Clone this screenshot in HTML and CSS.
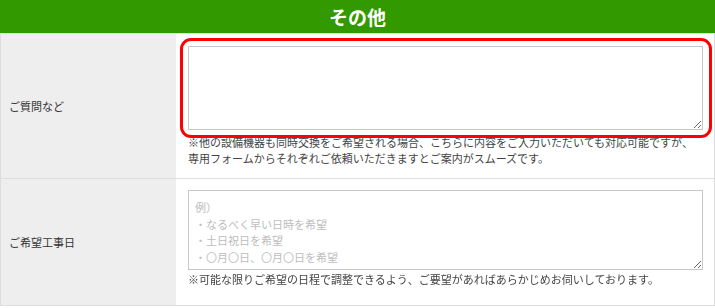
FILE: index.html
```html
<!DOCTYPE html>
<html lang="ja">
  <head>
    <meta charset="UTF-8" />
    <meta name="viewport" content="width=device-width, initial-scale=1.0" />
    <title>その他</title>
    <link rel="stylesheet" href="styles.css">
  </head>
  <body>
    <section class="form-block">
      <h2 class="block-title">その他</h2>
      <div class="form-table">
        <div class="form-row">
          <div class="form-label">ご質問など</div>
          <div class="form-field">
            <div class="highlight">
              <textarea class="field-area area-question"></textarea>
            </div>
            <p class="field-note">※他の設備機器も同時交換をご希望される場合、こちらに内容をご入力いただいても対応可能ですが、<br>専用フォームからそれぞれご依頼いただきますとご案内がスムーズです。</p>
          </div>
        </div>
        <div class="form-row">
          <div class="form-label">ご希望工事日</div>
          <div class="form-field field-date">
            <textarea class="field-area area-date" placeholder="例）&#10;・なるべく早い日時を希望&#10;・土日祝日を希望&#10;・〇月〇日、〇月〇日を希望"></textarea>
            <p class="field-note">※可能な限りご希望の日程で調整できるよう、ご要望があればあらかじめお伺いしております。</p>
          </div>
        </div>
      </div>
    </section>
  </body>
</html>
```

FILE: styles.css
```css
* {
  margin: 0;
  padding: 0;
  box-sizing: border-box;
}
body {
  background: #fff;
  color: #333;
  font-family: "Noto Sans CJK JP", "Noto Sans", sans-serif;
  font-size: 11px;
}
.form-block {
  width: 715px;
}
.block-title {
  height: 33px;
  line-height: 33px;
  background: #339900;
  color: #fff;
  font-size: 19px;
  font-weight: bold;
  text-align: center;
}
.form-table {
  border: 1px solid #ddd;
  border-bottom: none;
}
.form-row {
  display: grid;
  grid-template-columns: 175px 1fr;
  border-bottom: 1px solid #ddd;
}
.form-label {
  display: flex;
  align-items: center;
  padding-left: 8px;
  background: #eee;
}
.form-field {
  padding: 12px 11px 12px 12px;
}
.field-date {
  padding-top: 11px;
  padding-bottom: 18px;
}
.highlight {
  position: relative;
}
.highlight::after {
  content: "";
  position: absolute;
  top: -8px;
  left: -8px;
  right: -9px;
  bottom: -8px;
  border: 3px solid #f00;
  border-radius: 11px;
  pointer-events: none;
}
.field-area {
  display: block;
  width: 100%;
  padding: 8px 6px;
  border: 1px solid #c8c8c8;
  font-family: inherit;
  font-size: 11px;
  line-height: 16.5px;
  color: #333;
  background: #fff;
}
.field-area::placeholder {
  color: #bdbdbd;
}
.area-question {
  height: 84px;
}
.area-date {
  height: 80px;
}
.field-note {
  margin-top: 4px;
  line-height: 16px;
  color: #444;
}
.field-date .field-note {
  margin-top: 1px;
}
```
